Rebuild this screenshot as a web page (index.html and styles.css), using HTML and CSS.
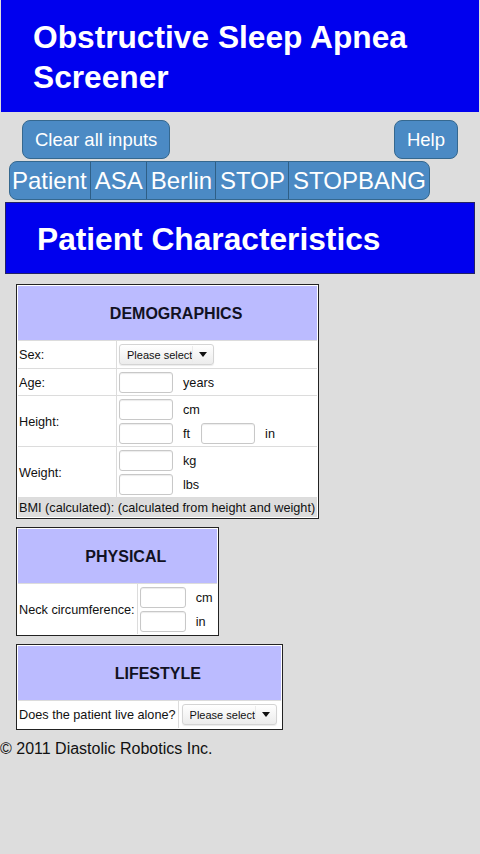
FILE: index.html
```html
<!DOCTYPE html>
<html lang="en">
<head>
  <meta charset="UTF-8">
  <meta name="viewport" content="width=device-width, initial-scale=1.0">
  <title>Obstructive Sleep Apnea Screener</title>
  <link rel="stylesheet" href="styles.css">
</head>
<body>
  <div class="app-header">
    <h1>Obstructive Sleep Apnea Screener</h1>
  </div>

  <div class="action-bar">
    <button class="button">Clear all inputs</button>
    <button class="button">Help</button>
  </div>

  <!-- Tab navigasi -->
  <div class="tabs">
    <a class="tab">Patient</a>
    <a class="tab">ASA</a>
    <a class="tab">Berlin</a>
    <a class="tab">STOP</a>
    <a class="tab">STOPBANG</a>
  </div>

  <div class="page-title">
    <h2>Patient Characteristics</h2>
  </div>

  <!-- Demographics -->
  <table class="form-table">
    <tr><th colspan="2">DEMOGRAPHICS</th></tr>
    <tr class="select-row">
      <td class="label demo-label">Sex:</td>
      <td class="field">
        <span class="select-wrap"><select><option>Please select</option><option>Male</option><option>Female</option></select></span>
      </td>
    </tr>
    <tr>
      <td class="label demo-label">Age:</td>
      <td class="field">
        <div class="field-line"><input type="text" class="num"><span class="unit">years</span></div>
      </td>
    </tr>
    <tr>
      <td class="label demo-label">Height:</td>
      <td class="field">
        <div class="field-line"><input type="text" class="num"><span class="unit">cm</span></div>
        <div class="field-line"><input type="text" class="num"><span class="unit">ft</span><input type="text" class="num"><span class="unit">in</span></div>
      </td>
    </tr>
    <tr>
      <td class="label demo-label">Weight:</td>
      <td class="field">
        <div class="field-line"><input type="text" class="num"><span class="unit">kg</span></div>
        <div class="field-line"><input type="text" class="num"><span class="unit">lbs</span></div>
      </td>
    </tr>
    <tr class="calc-row">
      <td colspan="2">BMI (calculated): (calculated from height and weight)</td>
    </tr>
  </table>

  <!-- Physical -->
  <table class="form-table physical">
    <tr><th colspan="2">PHYSICAL</th></tr>
    <tr>
      <td class="label">Neck circumference:</td>
      <td class="field">
        <div class="field-line"><input type="text" class="num small"><span class="unit">cm</span></div>
        <div class="field-line"><input type="text" class="num small"><span class="unit">in</span></div>
      </td>
    </tr>
  </table>

  <!-- Lifestyle -->
  <table class="form-table lifestyle">
    <tr><th colspan="2">LIFESTYLE</th></tr>
    <tr class="select-row">
      <td class="label">Does the patient live alone?</td>
      <td class="field">
        <span class="select-wrap"><select><option>Please select</option><option>Yes</option><option>No</option></select></span>
      </td>
    </tr>
  </table>

  <div class="footer">&copy; 2011 Diastolic Robotics Inc.</div>
</body>
</html>
```

FILE: styles.css
```css
body {
  font-family: "Liberation Sans", Arial, sans-serif;
  margin: 0;
  padding: 0;
  background-color: #dddddd;
  color: #111;
}

.app-header {
  background-color: #0000ee;
  margin: 0 1px;
  padding: 17px 20px 15px 32px;
}

.app-header h1 {
  margin: 0;
  color: white;
  font-size: 31.7px;
  line-height: 40px;
  font-weight: bold;
}

.action-bar {
  display: flex;
  justify-content: space-between;
  margin: 8px 22px 0 22px;
}

.button {
  font-family: inherit;
  font-size: 18.5px;
  height: 39px;
  padding: 0 12px;
  background-color: #4b8ac4;
  color: white;
  border: 1px solid #35688f;
  border-radius: 8px;
}

.tabs {
  display: inline-flex;
  margin: 2px 0 0 9px;
  background-color: #4b8ac4;
  border: 1px solid #35688f;
  border-radius: 8px;
  overflow: hidden;
}

.tab {
  color: white;
  font-size: 24px;
  line-height: 37px;
  padding: 0 3px 0 4px;
  border-left: 1px solid #2f5f86;
}

.tab:first-child {
  border-left: none;
  padding-left: 2px;
}

.page-title {
  background-color: #0000ee;
  margin: 2px 5px 0 5px;
  height: 72px;
  border: 1px solid #222266;
  box-sizing: border-box;
  padding-left: 31px;
}

.page-title h2 {
  margin: 0;
  color: white;
  font-size: 31.7px;
  line-height: 72px;
}

.form-table {
  margin: 10px 0 8px 16px;
  background-color: white;
  border: 1px solid #222;
  padding: 1px;
  border-spacing: 0;
  font-size: 12.7px;
}

.form-table + .form-table {
  margin-top: 0;
}

.form-table th {
  background-color: #bbbbff;
  height: 52px;
  padding: 2px 0 0 17px;
  font-size: 16px;
  color: #111122;
  text-align: center;
}

.form-table td {
  border-top: 1px solid #dcdcdc;
  padding: 3px 2px 2px 2px;
  white-space: nowrap;
}

.form-table td.label {
  padding-left: 1px;
  border-right: 1px solid #dcdcdc;
}

.form-table td.field {
  padding-left: 2px;
  padding-right: 4px;
}

.select-row td {
  padding-bottom: 3px;
}

.lifestyle .select-row td.field {
  padding-left: 3px;
}

.demo-label {
  width: 95px;
}

.field-line {
  display: flex;
  align-items: center;
  height: 21px;
}

.field-line + .field-line {
  margin-top: 3px;
}

.num {
  width: 54px;
  height: 21px;
  box-sizing: border-box;
  border: 1px solid #c8c8c8;
  border-radius: 3px;
  background-color: white;
  box-shadow: inset 0 1px 1px rgba(0, 0, 0, 0.08);
  margin: 0;
  padding: 0 2px;
}

.num.small {
  width: 46px;
}

.unit {
  margin: 0 11px 0 10px;
}

.unit:last-child {
  margin-right: 0;
}

.calc-row td {
  background-color: #dddddd;
  padding: 2px 2px 2px 1px;
  height: 15px;
}

.select-wrap {
  position: relative;
  display: inline-block;
  vertical-align: middle;
}

.select-wrap select {
  -webkit-appearance: none;
  appearance: none;
  font-family: inherit;
  font-size: 11px;
  color: #111;
  width: 95px;
  height: 21px;
  padding: 0 0 0 7px;
  border: 1px solid #d4d4d4;
  border-radius: 3px;
  background: linear-gradient(#ffffff, #ececec);
  box-shadow: 0 1px 1px rgba(0, 0, 0, 0.08);
}

.select-wrap::after {
  content: "";
  position: absolute;
  right: 7px;
  top: 8px;
  border-left: 4px solid transparent;
  border-right: 4px solid transparent;
  border-top: 5px solid #111;
}

.select-wrap::before {
  content: "";
  position: absolute;
  right: 21px;
  top: 2px;
  bottom: 2px;
  border-left: 1px solid #ececec;
}

.footer {
  font-size: 16px;
  line-height: 18px;
  margin-top: 10px;
}
```
